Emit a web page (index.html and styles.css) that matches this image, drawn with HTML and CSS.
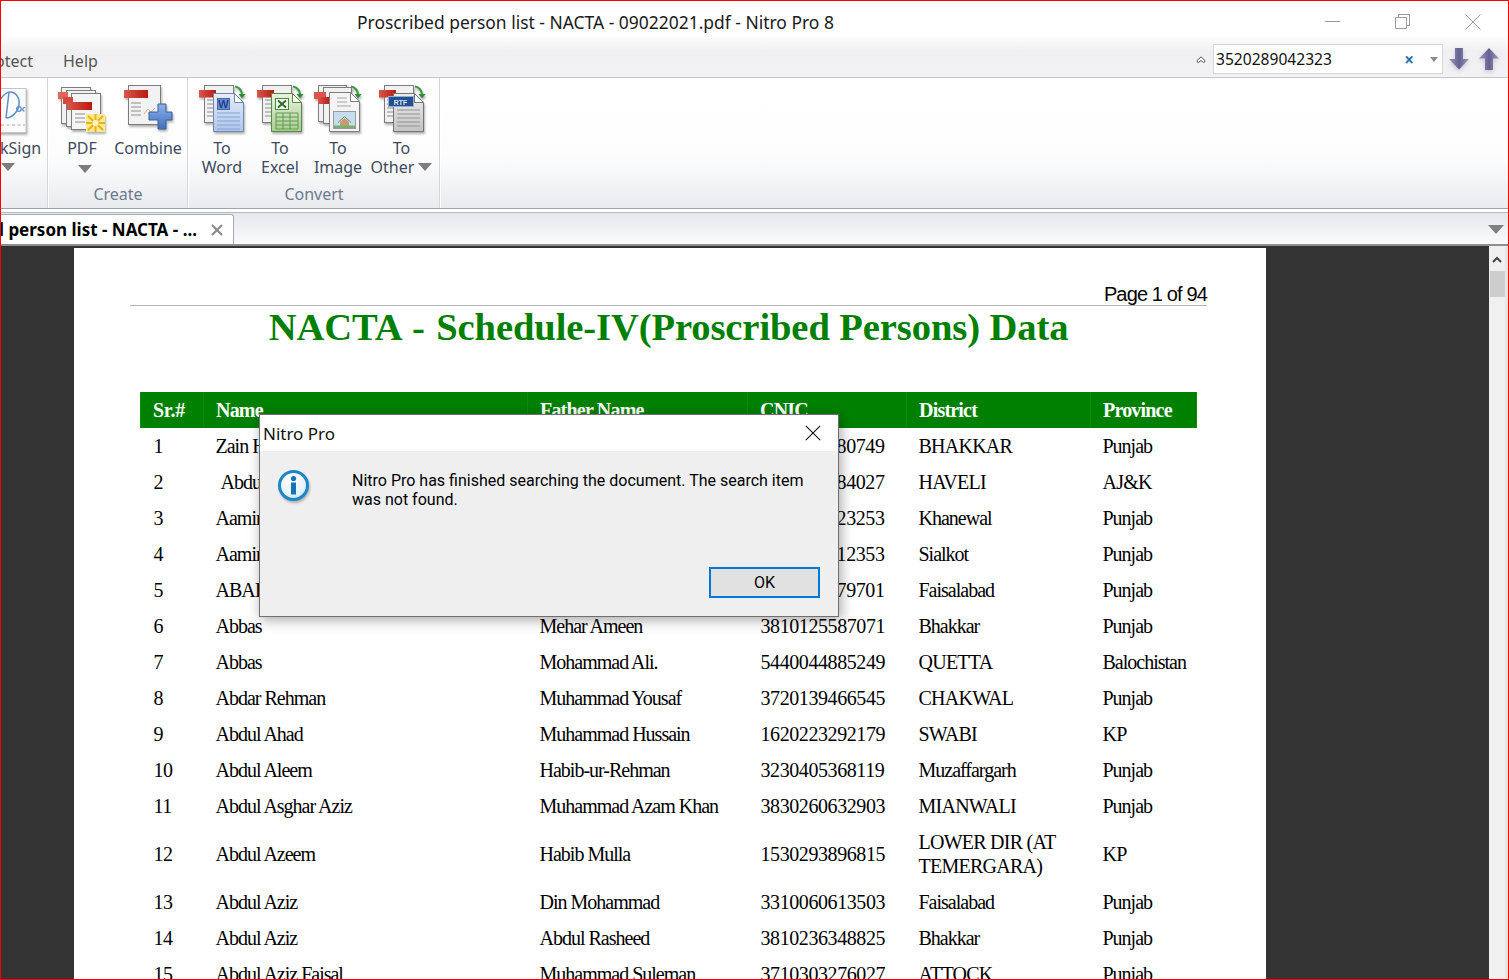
FILE: index.html
```html
<!DOCTYPE html>
<html lang="en">
<head>
<meta charset="utf-8">
<title>Proscribed person list - NACTA - 09022021.pdf - Nitro Pro 8</title>
<link rel="stylesheet" href="styles.css">
</head>
<body>
<svg class="defs" width="0" height="0" aria-hidden="true">
  <defs>
    <linearGradient id="gRed" x1="0" y1="0" x2="1" y2="0"><stop offset="0" stop-color="#d9564c"/><stop offset="1" stop-color="#b81a10"/></linearGradient>
    <linearGradient id="gWord" x1="0" y1="0" x2="0" y2="1"><stop offset="0" stop-color="#e6edf9"/><stop offset="1" stop-color="#aec5ea"/></linearGradient>
    <linearGradient id="gExcel" x1="0" y1="0" x2="0" y2="1"><stop offset="0" stop-color="#e8f3e0"/><stop offset="1" stop-color="#a9cc93"/></linearGradient>
    <linearGradient id="gGray" x1="0" y1="0" x2="0" y2="1"><stop offset="0" stop-color="#ececec"/><stop offset="1" stop-color="#c4c4c4"/></linearGradient>
    <linearGradient id="gPlus" x1="0" y1="0" x2="0" y2="1"><stop offset="0" stop-color="#8fb2e6"/><stop offset="1" stop-color="#3f6fc0"/></linearGradient>
    <linearGradient id="gArrow" x1="0" y1="0" x2="1" y2="0"><stop offset="0" stop-color="#9a99c2"/><stop offset=".5" stop-color="#65618f"/><stop offset="1" stop-color="#9a99c2"/></linearGradient>
    <radialGradient id="gInfo" cx=".4" cy=".3" r=".8"><stop offset="0" stop-color="#ffffff"/><stop offset=".65" stop-color="#e6f3fb"/><stop offset="1" stop-color="#b5dcf2"/></radialGradient>
    <symbol id="pageBack" viewBox="0 0 50 50">
      <rect x="7.500" y="1.500" width="29" height="37" fill="#f1f1f1" stroke="#7c7c7c"/>
      <path d="M10 16h8M10 20h8M10 24h8M10 28h8M10 32h8" stroke="#8e8e8e" stroke-width="1.200"/>
      <rect x="2" y="6" width="17" height="7.500" fill="url(#gRed)"/>
      <path d="M38 2.500c4 .5 7 4 7 8" fill="none" stroke="#3f9a48" stroke-width="2.200"/>
      <path d="M41.500 10h7L45 14.500z" fill="#2f8a3a"/>
    </symbol>
  </defs>
</svg>

<div class="app">
  <header class="top">
    <div class="titlebar">
      <div class="title">Proscribed person list - NACTA - 09022021.pdf - Nitro Pro 8</div>
      <div class="winctl">
        <svg class="wc" width="16" height="16" viewBox="0 0 16 16"><path d="M0 7.500h15" stroke="#9a9a9a"/></svg>
        <svg class="wc" width="16" height="16" viewBox="0 0 16 16"><path d="M.5 3.500h11v11H.5zM3.500 3.500V.5h11v11h-3" fill="none" stroke="#9a9a9a"/></svg>
        <svg class="wc" width="16" height="16" viewBox="0 0 16 16"><path d="M.5.500l15 15M15.500.500l-15 15" stroke="#9a9a9a"/></svg>
      </div>
    </div>
    <div class="menubar">
      <div class="menu-clip"><span>Protect</span></div>
      <div class="menu-item">Help</div>
      <div class="finder">
        <svg class="collapse" width="10" height="8" viewBox="0 0 10 8"><path d="M5 .8L9.200 4.800 7.800 6.800 5 4.500 2.200 6.800.8 4.800z" fill="#fff" stroke="#555" stroke-width="1"/></svg>
        <div class="search">
          <span class="search-val">3520289042323</span>
          <span class="search-x">×</span>
          <span class="tri tri-sm"></span>
        </div>
        <svg class="nav-arrow" width="22" height="24" viewBox="0 0 22 24"><path d="M7 1h8v11h6L11 22.500 1 12h6z" fill="url(#gArrow)"/></svg>
        <svg class="nav-arrow" width="22" height="24" viewBox="0 0 22 24"><path d="M11 1l10 10.500h-6V23H7V11.500H1z" fill="url(#gArrow)"/></svg>
      </div>
    </div>
  </header>

  <section class="ribbon">
    <div class="rgroup rgroup-sign">
      <div class="rbtns">
        <div class="rbtn rbtn-sign">
          <svg class="ricon" width="54" height="50" viewBox="0 0 54 50"><rect x="1" y="4.500" width="52" height="44" fill="#fbfbfd" stroke="#c4c4c4"/><path d="M28 15c2-4 6-7 9-7 6 0 10 6 9 13-1 7-7 13-13 13M36 8c-1 9-2 18-3 26" fill="none" stroke="#5d8fc9" stroke-width="1.500"/><circle cx="46" cy="25" r="2.300" fill="none" stroke="#5d8fc9" stroke-width="1.300"/><path d="M52 23.500c-2-.8-3.500 3.500-.5 3.500" fill="none" stroke="#5d8fc9" stroke-width="1.300"/><path d="M28 41h24" stroke="#a8a8a8" stroke-dasharray="3 2.500"/></svg>
          <div class="rlabel">QuickSign</div>
          <span class="tri"></span>
        </div>
      </div>
    </div>
    <div class="rgroup rgroup-create">
      <div class="rbtns">
        <div class="rbtn rbtn-pdf">
          <svg class="ricon" width="50" height="50" viewBox="0 0 50 50">
            <rect x="4.500" y="3.500" width="29" height="36" fill="#f2f2f2" stroke="#7c7c7c"/>
            <rect x="9.500" y="6.500" width="29" height="36" fill="#f2f2f2" stroke="#7c7c7c"/>
            <rect x="14.500" y="9.500" width="29" height="36" fill="#f5f5f5" stroke="#7c7c7c"/>
            <rect x="1" y="8" width="10" height="7" fill="#e0665c"/>
            <rect x="6" y="13" width="10" height="7" fill="#d6473c"/>
            <rect x="10" y="18" width="25" height="8" fill="url(#gRed)"/>
            <path d="M18 30h10M18 34h10M18 38h10" stroke="#8e8e8e" stroke-width="1.200"/>
            <rect x="29" y="30" width="19" height="18" fill="#fbe98c"/>
            <path d="M38.500 30v18M29 39h19M31 32l15 14M46 32L31 46" stroke="#eab21f" stroke-width="2"/>
            <circle cx="38.500" cy="39" r="3" fill="#fff7c4"/>
          </svg>
          <div class="rlabel">PDF</div>
          <span class="tri"></span>
        </div>
        <div class="rbtn rbtn-combine">
          <svg class="ricon" width="50" height="50" viewBox="0 0 50 50">
            <rect x="5.500" y="1.500" width="32" height="39" fill="#f2f2f2" stroke="#7c7c7c"/>
            <rect x="1" y="6" width="24" height="8" fill="url(#gRed)"/>
            <path d="M8 19h10M8 23h10M8 27h10M8 31h10" stroke="#8e8e8e" stroke-width="1.200"/>
            <path d="M21 30l4-5 3 3 4-4" fill="none" stroke="#e2a99c"/>
            <path d="M26 28h9v-8h8v8h6v8h-6v9h-8v-9h-9z" fill="url(#gPlus)" stroke="#37619f"/>
          </svg>
          <div class="rlabel">Combine</div>
        </div>
      </div>
      <div class="rgroup-name">Create</div>
    </div>
    <div class="rgroup rgroup-convert">
      <div class="rbtns">
        <div class="rbtn rbtn-conv">
          <svg class="ricon" width="50" height="50" viewBox="0 0 50 50">
            <use href="#pageBack"/>
            <path d="M16.500 9.500h21l9 9v29h-30z" fill="url(#gWord)" stroke="#7088ad"/>
            <path d="M37.500 9.500v9h9z" fill="#fff" stroke="#7088ad"/>
            <path d="M20 29h23M20 33h23M20 37h23M20 41h23M20 45h23" stroke="#86a2d2"/>
            <rect x="20.500" y="14.500" width="12" height="11" fill="#6a8ed0" stroke="#4869ab"/>
            <text x="26.500" y="23.500" class="ic-txt ic-w">W</text>
          </svg>
          <div class="rlabel">To<br>Word</div>
        </div>
        <div class="rbtn rbtn-conv">
          <svg class="ricon" width="50" height="50" viewBox="0 0 50 50">
            <use href="#pageBack"/>
            <path d="M16.500 9.500h21l9 9v29h-30z" fill="url(#gExcel)" stroke="#55893f"/>
            <path d="M37.500 9.500v9h9z" fill="#fff" stroke="#55893f"/>
            <path d="M21 29h22v16H21zM21 33h22M21 37h22M21 41h22M28 29v16M35 29v16" fill="none" stroke="#5f9a4f"/>
            <rect x="20.500" y="14.500" width="13" height="11" fill="#f4f9ee" stroke="#4f8a3f"/>
            <path d="M23 16.500l8 7M31 16.500l-8 7" stroke="#2f6f2a" stroke-width="2"/>
          </svg>
          <div class="rlabel">To<br>Excel</div>
        </div>
        <div class="rbtn rbtn-conv">
          <svg class="ricon" width="50" height="50" viewBox="0 0 50 50">
            <rect x="5.500" y="1.500" width="28" height="36" fill="#f1f1f1" stroke="#7c7c7c"/>
            <rect x="10.500" y="3.500" width="28" height="36" fill="#f1f1f1" stroke="#7c7c7c"/>
            <rect x="1" y="8" width="12" height="7" fill="#d9564c"/>
            <rect x="5" y="13" width="12" height="7" fill="url(#gRed)"/>
            <path d="M38 2.500c4 .5 7 4 7 8" fill="none" stroke="#3f9a48" stroke-width="2.200"/>
            <path d="M41.500 10h7L45 14.500z" fill="#2f8a3a"/>
            <path d="M16.500 8.500h21l9 9v30h-30z" fill="#f4f4f4" stroke="#7c7c7c"/>
            <path d="M37.500 8.500v9h9z" fill="#fff" stroke="#7c7c7c"/>
            <path d="M24 14h10M24 18h10M24 22h14" stroke="#a5a5a5"/>
            <rect x="20.500" y="27.500" width="22" height="17" fill="#c7dcec" stroke="#9a9a9a"/>
            <path d="M27 38l4.500-4 4.500 4v4h-9z" fill="#c79b6b"/>
            <path d="M25 38.500l6.500-6 6.500 6" fill="none" stroke="#7f8f6a"/>
            <path d="M21 41.500h21V44H21z" fill="#79ad72"/>
          </svg>
          <div class="rlabel">To<br>Image</div>
        </div>
        <div class="rbtn rbtn-other">
          <svg class="ricon" width="50" height="50" viewBox="0 0 50 50">
            <use href="#pageBack"/>
            <path d="M16.500 9.500h21l9 9v29h-30z" fill="url(#gGray)" stroke="#747474"/>
            <path d="M37.500 9.500v9h9z" fill="#fff" stroke="#747474"/>
            <path d="M20 26h23M20 30h23M20 34h23M20 38h23M20 42h23" stroke="#939393"/>
            <rect x="11.500" y="12.500" width="25" height="10" fill="#24508f" stroke="#8fb2dc"/>
            <text x="23.500" y="20.500" class="ic-txt ic-rtf">RTF</text>
          </svg>
          <div class="rlabel">To<br>Other<span class="tri tri-inline"></span></div>
        </div>
      </div>
      <div class="rgroup-name">Convert</div>
    </div>
  </section>

  <div class="tabstrip">
    <div class="tab">
      <span class="tab-text">Proscribed person list - NACTA - ...</span>
      <svg class="tab-x" width="14" height="14" viewBox="0 0 14 14"><path d="M2 2l10 10M12 2L2 12" stroke="#8c8c8c" stroke-width="2.200"/></svg>
    </div>
    <span class="tri tri-tabs"></span>
  </div>

  <main class="viewer">
    <div class="doc">
      <article class="page">
        <div class="page-no">Page 1 of 94</div>
        <h1 class="doc-title">NACTA <span class="dash">-</span> Schedule-IV(Proscribed Persons) Data</h1>
        <table class="data">
          <colgroup><col class="c1"><col class="c2"><col class="c3"><col class="c4"><col class="c5"><col class="c6"></colgroup>
          <thead><tr><th>Sr.#</th><th>Name</th><th>Father Name</th><th>CNIC</th><th>District</th><th>Province</th></tr></thead>
          <tbody>
            <tr><td>1</td><td>Zain H</td><td></td><td class="tail">80749</td><td class="caps">BHAKKAR</td><td>Punjab</td></tr>
            <tr><td>2</td><td class="indent">Abdu</td><td></td><td class="tail">84027</td><td class="caps">HAVELI</td><td class="caps">AJ&amp;K</td></tr>
            <tr><td>3</td><td>Aamir</td><td></td><td class="tail">23253</td><td>Khanewal</td><td>Punjab</td></tr>
            <tr><td>4</td><td>Aamir</td><td></td><td class="tail">12353</td><td>Sialkot</td><td>Punjab</td></tr>
            <tr><td>5</td><td>ABAI</td><td></td><td class="tail">79701</td><td>Faisalabad</td><td>Punjab</td></tr>
            <tr><td>6</td><td>Abbas</td><td>Mehar Ameen</td><td>3810125587071</td><td>Bhakkar</td><td>Punjab</td></tr>
            <tr><td>7</td><td>Abbas</td><td>Mohammad Ali.</td><td>5440044885249</td><td class="caps">QUETTA</td><td>Balochistan</td></tr>
            <tr><td>8</td><td>Abdar Rehman</td><td>Muhammad Yousaf</td><td>3720139466545</td><td class="caps">CHAKWAL</td><td>Punjab</td></tr>
            <tr><td>9</td><td>Abdul Ahad</td><td>Muhammad Hussain</td><td>1620223292179</td><td class="caps">SWABI</td><td class="caps">KP</td></tr>
            <tr><td>10</td><td>Abdul Aleem</td><td>Habib-ur-Rehman</td><td>3230405368119</td><td>Muzaffargarh</td><td>Punjab</td></tr>
            <tr><td>11</td><td>Abdul Asghar Aziz</td><td>Muhammad Azam Khan</td><td>3830260632903</td><td class="caps">MIANWALI</td><td>Punjab</td></tr>
            <tr><td>12</td><td>Abdul Azeem</td><td>Habib Mulla</td><td>1530293896815</td><td class="caps">LOWER DIR (AT TEMERGARA)</td><td class="caps">KP</td></tr>
            <tr><td>13</td><td>Abdul Aziz</td><td>Din Mohammad</td><td>3310060613503</td><td>Faisalabad</td><td>Punjab</td></tr>
            <tr><td>14</td><td>Abdul Aziz</td><td>Abdul Rasheed</td><td>3810236348825</td><td>Bhakkar</td><td>Punjab</td></tr>
            <tr><td>15</td><td>Abdul Aziz Faisal</td><td>Muhammad Suleman</td><td>3710303276027</td><td class="caps">ATTOCK</td><td>Punjab</td></tr>
          </tbody>
        </table>
      </article>
    </div>
    <div class="scrollbar">
      <svg class="sb-up" width="10" height="7" viewBox="0 0 10 7"><path d="M1 6l4-4 4 4" fill="none" stroke="#444" stroke-width="2"/></svg>
      <div class="sb-thumb"></div>
    </div>
  </main>
</div>

<div class="dialog" role="dialog">
  <div class="dlg-head">
    <span class="dlg-title">Nitro Pro</span>
    <svg class="dlg-close" width="16" height="16" viewBox="0 0 16 16"><path d="M.8.800l14.400 14.400M15.200.800L.8 15.200" stroke="#111" stroke-width="1.100"/></svg>
  </div>
  <div class="dlg-body">
    <div class="dlg-msg">
      <svg class="dlg-icon" width="34" height="34" viewBox="0 0 34 34">
        <circle cx="16.500" cy="16.500" r="14" fill="url(#gInfo)" stroke="#1c86c6" stroke-width="3"/>
        <circle cx="16.500" cy="9.500" r="2.600" fill="#1574b8"/>
        <path d="M14 13.500h5v12h-5z" fill="#1574b8"/>
      </svg>
      <p class="dlg-text">Nitro Pro has finished searching the document. The search item was not found.</p>
    </div>
    <div class="dlg-actions"><button class="ok" type="button">OK</button></div>
  </div>
</div>
</body>
</html>
```

FILE: styles.css
```css
* { box-sizing: border-box; }
html, body { margin: 0; padding: 0; }
body {
  position: relative;
  width: 1509px;
  height: 980px;
  border: 1px solid #ff0000;
  overflow: hidden;
  background: #fff;
  font-family: "Noto Sans", sans-serif;
  color: #111;
}
.defs { position: absolute; }
.app { display: flex; flex-direction: column; height: 978px; width: 1507px; overflow: hidden; }

/* Title + menu */
.top {
  height: 77px;
  flex: none;
  background: linear-gradient(#fff 0, #fff 33px, #f0f0f2 50px, #f2f2f4 76px);
  border-bottom: 1px solid #c4c7cb;
}
.titlebar { display: flex; height: 39px; align-items: center; padding-left: 356px; }
.title { font-size: 17.45px; color: #1a1a1a; white-space: nowrap; margin-top: 3px; }
.winctl { display: flex; margin-left: auto; gap: 54px; padding-right: 27px; padding-top: 2px; }
.menubar { display: flex; height: 37px; font-size: 16px; color: #555; }
.menu-clip { width: 32px; display: flex; justify-content: flex-end; overflow: hidden; white-space: nowrap; flex: none; line-height: 22px; margin-top: 10px; height: 24px; }
.menu-item { margin-left: 30px; line-height: 22px; margin-top: 10px; }
.finder { display: flex; align-items: center; align-self: flex-start; margin: 4px 8px 0 auto; }
.collapse { margin-right: 7px; margin-top: 2px; }
.search {
  width: 230px; height: 30px;
  display: flex; align-items: center;
  border: 1px solid #d6d6d6; background: #fff;
  padding-left: 2px;
}
.search-val { font-size: 15.6px; color: #111; flex: 1; }
.search-x { color: #2f70a8; font-size: 17px; font-weight: 700; margin-right: 16px; line-height: 1; }
.tri { display: inline-block; width: 0; height: 0; border-left: 7px solid transparent; border-right: 7px solid transparent; border-top: 8px solid #7c7c7c; }
.tri-sm { border-left-width: 4px; border-right-width: 4px; border-top-width: 5px; margin-right: 4px; border-top-color: #8a8a8a; }
.nav-arrow { margin-left: 5px; filter: drop-shadow(0 2px 2px rgba(70, 70, 110, .25)); }
.nav-arrow + .nav-arrow { margin-left: 8px; }

/* Ribbon */
.ribbon {
  display: flex; height: 131px; flex: none;
  background: linear-gradient(#fff 0, #fdfdfe 60%, #e9ebef 100%);
  border-bottom: 1px solid #9fa4aa;
}
.rgroup {
  position: relative;
  display: flex; flex-direction: column;
  border-right: 1px solid #d5d7da;
  box-shadow: 1px 0 0 #fff;
  margin-right: 1px;
  padding-top: 6px;
}
.rgroup-sign { width: 47px; overflow: hidden; padding-right: 5px; }
.rgroup-sign .rbtns { justify-content: flex-end; }
.rgroup-create { width: 139px; padding-left: 13px; }
.rgroup-convert { width: 251px; padding-left: 4px; }
.rbtns { display: flex; height: 99px; }
.rgroup-name { text-align: center; font-size: 16px; color: #6b7a8c; line-height: 22px; }
.rgroup-create .rgroup-name { margin-left: -13px; }
.rgroup-convert .rgroup-name { margin-left: -4px; }
.rbtn { display: flex; flex-direction: column; align-items: center; flex: none; }
.ricon { flex: none; filter: blur(.25px) drop-shadow(1px 2px 1px rgba(0, 0, 0, .3)); }
.rlabel { font-size: 16px; line-height: 19px; color: #3d4a5c; margin-top: 5px; text-align: center; white-space: nowrap; }
.rbtn-sign { width: 85px; flex: none; }
.rbtn-sign .rlabel { margin-right: -8px; }
.rbtn-sign .tri { margin-top: 5px; margin-left: 17px; }
.rbtn-pdf { width: 40px; margin-right: 11px; }
.rbtn-pdf .tri { margin-top: 7px; margin-left: 6px; }
.rbtn-combine { width: 70px; }
.rbtn-conv { width: 58px; }
.rbtn-other { width: 69px; }
.tri-inline { margin-left: 4px; margin-bottom: 4px; vertical-align: middle; }

.ic-txt { font-family: "Liberation Sans", sans-serif; text-anchor: middle; font-weight: 700; }
.ic-w { font-size: 11px; fill: #21408a; }
.ic-rtf { font-size: 7px; fill: #dbe7f7; }

/* Tabs */
.tabstrip {
  height: 34px; flex: none;
  display: flex; align-items: flex-end;
  background: linear-gradient(#e4e7ec, #fafbfc);
  border-top: 1px solid #b5b9be;
  border-bottom: 2px solid #8d8f92;
  margin-top: 3px;
}
.tab {
  width: 233px; height: 30px;
  display: flex; align-items: center; justify-content: flex-end;
  background: #fff;
  border: 1px solid #a9adb2; border-left: 0; border-bottom: 0;
  border-top-right-radius: 3px;
  overflow: hidden;
  padding-right: 9px;
}
.tab-text { font-size: 17px; font-weight: 700; color: #000; white-space: nowrap; flex: none; margin-right: 13px; }
.tab-x { flex: none; }
.tri-tabs { margin-left: auto; margin-right: 4px; margin-bottom: 10px; border-left-width: 8px; border-right-width: 8px; border-top-width: 9px; border-top-color: #7f7f7f; }

/* Document */
.viewer { flex: 1; display: flex; background: #333; min-height: 0; overflow: hidden; }
.doc { flex: 1; padding: 2px 0 0 73px; min-width: 0; }
.page { width: 1192px; background: #fff; padding: 0 59px 0 56px; height: 900px; }
.page-no {
  height: 58px; padding-top: 35px;
  text-align: right;
  font: 20px/22px "Liberation Sans", sans-serif;
  letter-spacing: -.86px;
  color: #000;
  border-bottom: 1px solid #b4b4b4;
}
.doc-title {
  margin: 0; text-align: center;
  font: 700 38.6px/42px "Liberation Serif", serif;
  letter-spacing: -.1px;
  color: #008000;
  white-space: nowrap;
}
.dash { margin: 0 2px; }
.data {
  table-layout: fixed; width: 1056px;
  margin: 44px 0 0 10px;
  border-collapse: collapse;
  font: 20px/24px "Liberation Serif", serif;
  letter-spacing: -1px;
  color: #000;
}
.c1 { width: 63px; } .c2 { width: 324px; } .c3 { width: 220px; }
.c4 { width: 159px; } .c5 { width: 184px; } .c6 { width: 106px; }
.data th {
  height: 36px; padding: 6px 12px;
  background: #008000; color: #fff;
  text-align: left; font-weight: 700;
  letter-spacing: -.8px;
  border-left: 1px solid #0f880f;
  border-right: 1px solid #0f880f;
}
.data th:first-child { letter-spacing: -.3px; }
.data td { height: 36px; padding: 6px 12.500px 6px 12px; vertical-align: middle; }
.data td:nth-child(1) { letter-spacing: -.42px; padding-left: 13px; }
.data td:nth-child(4) { letter-spacing: -.42px; padding-left: 13px; }
.data .caps { letter-spacing: -.75px; }
.data .tail { text-align: right; padding-right: 22px; }
.data .indent { padding-left: 17px; }

.scrollbar { width: 19px; flex: none; background: #f0f0f0; border-right: 3px solid #e6e6e6; display: flex; flex-direction: column; align-items: center; }
.sb-up { margin-top: 10px; }
.sb-thumb { width: 15px; height: 26px; margin-top: 8px; background: #cdcdcd; }

/* Dialog */
.dialog {
  position: absolute; left: 258px; top: 413px;
  width: 580px; height: 203px;
  display: flex; flex-direction: column;
  background: #efefef;
  border: 1px solid #6f6f6f;
  box-shadow: 2px 3px 12px rgba(0, 0, 0, .35);
}
.dlg-head { height: 36px; flex: none; background: #fff; display: flex; align-items: center; justify-content: space-between; padding: 0 17px 0 3px; }
.dlg-title { font-size: 17px; color: #111; }
.dlg-close { margin-top: 0; }
.dlg-body { flex: 1; display: flex; flex-direction: column; padding: 20px 18px 18px 17px; }
.dlg-msg { display: flex; flex: 1; gap: 41px; }
.dlg-icon { flex: none; margin-top: -2px; filter: drop-shadow(1px 2px 1px rgba(0, 0, 0, .25)); }
.dlg-text { margin: 0; width: 462px; font: 16px/19px "Roboto", sans-serif; color: #000; }
.dlg-actions { display: flex; justify-content: flex-end; }
.ok {
  width: 111px; height: 31px;
  background: #e1e1e1; border: 2px solid #0078d7;
  font: 16px "Roboto", sans-serif; color: #000; padding: 0;
}
```
